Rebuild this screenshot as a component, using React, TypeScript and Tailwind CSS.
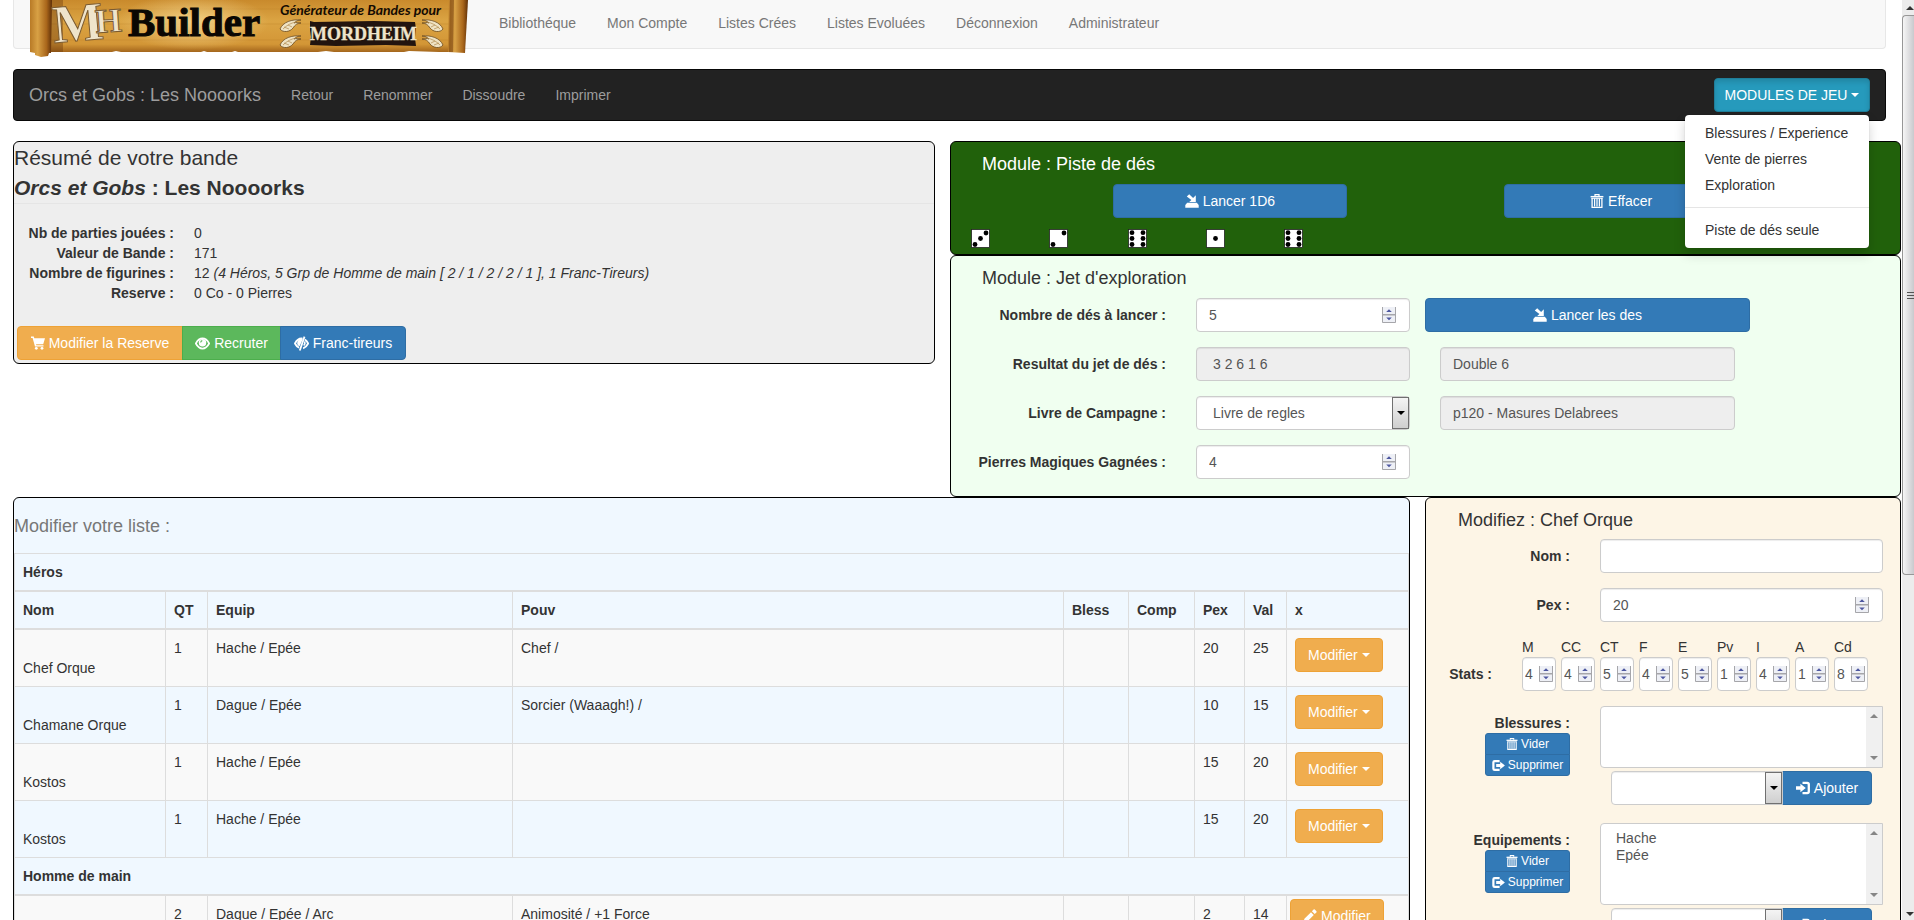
import React from "react";

type IconProps = { className?: string };

const CartIcon = ({ className = "size-[14px]" }: IconProps) => (
  <svg viewBox="0 0 14 14" className={className} fill="currentColor" aria-hidden="true">
    <path d="M0 .5h2.800l.5 1.700H14L12.200 8.200H5l.3 1h7.200v1.400H4L1.600 2H0z" />
    <circle cx="5.3" cy="12.3" r="1.4" />
    <circle cx="11" cy="12.3" r="1.4" />
  </svg>
);

const EyeIcon = ({ className = "size-[15px]" }: IconProps) => (
  <svg viewBox="0 0 14 14" className={className} fill="none" stroke="currentColor" aria-hidden="true">
    <path d="M.8 7C2.5 3.8 4.8 2.3 7 2.3S11.500 3.800 13.200 7C11.500 10.200 9.200 11.700 7 11.700S2.500 10.200.8 7z" strokeWidth="1.6" />
    <circle cx="7" cy="6.200" r="3.500" fill="currentColor" stroke="none" />
    <path d="M5.300 6a1.800 1.800 0 0 1 1.500-1.700" stroke="#5cb85c" strokeWidth="1" />
  </svg>
);

const EyeOffIcon = ({ className = "size-[15px]" }: IconProps) => (
  <svg viewBox="0 0 14 14" className={className} fill="none" stroke="currentColor" aria-hidden="true">
    <path d="M8 2.400C5 2 2.500 3.800.9 7c1 1.900 2.300 3.300 3.800 4M10.200 3.200c1.200.8 2.200 2.100 3 3.800-1.200 2.300-2.800 3.900-4.700 4.500" strokeWidth="1.700" />
    <path d="M8.200 3A3.400 3.400 0 0 0 5.200 9.600z" fill="currentColor" stroke="none" />
    <path d="M9.800.6 5.400 13.500" strokeWidth="1.700" />
    <path d="M10 5c.5 1.400.1 2.700-.9 3.800" strokeWidth="1.500" />
  </svg>
);

const SaveIcon = ({ className = "size-[14px]" }: IconProps) => (
  <svg viewBox="0 0 14 14" className={className} fill="currentColor" aria-hidden="true">
    <path d="M1.800 2.600 4.200.3l3.900 3.600L10.800 1.300V8H4.200l2.200-2z" />
    <path d="M2.200 8.800h9.600l1.900 2.300v2.600H.3v-2.600z" />
  </svg>
);

const TrashIcon = ({ className = "size-[14px]" }: IconProps) => (
  <svg viewBox="0 0 14 14" className={className} fill="none" stroke="currentColor" aria-hidden="true">
    <path d="M.6 2.700h12.800" strokeWidth="1.500" />
    <path d="M5 2V.7h4V2" strokeWidth="1.200" />
    <path d="M2.100 4v9.300h9.800V4" strokeWidth="1.300" />
    <path d="M4.600 4.500v8M7 4.500v8M9.400 4.500v8" strokeWidth="1.200" />
    <path d="M1.500 4.400h11" strokeWidth=".9" />
  </svg>
);

const LogOutIcon = ({ className = "size-[14px]" }: IconProps) => (
  <svg viewBox="0 0 14 14" className={className} fill="none" stroke="currentColor" aria-hidden="true">
    <path d="M8.200 2.200H2.900Q1.500 2.200 1.500 3.600v6.800Q1.500 11.800 2.900 11.800h5.300" strokeWidth="2.400" />
    <path d="M4.500 5.400h4.300V2.900L13.900 7l-5.100 4.100V8.600H4.500z" fill="currentColor" stroke="none" />
  </svg>
);

const LogInIcon = ({ className = "size-[14px]" }: IconProps) => (
  <svg viewBox="0 0 14 14" className={className} fill="none" stroke="currentColor" aria-hidden="true">
    <path d="M6.500 1.900h4.700q1.600 0 1.600 1.600v7q0 1.600-1.600 1.600H6.500" strokeWidth="2.300" />
    <path d="M0 5.300h4.400V2.700L9.800 7l-5.400 4.300V8.700H0z" fill="currentColor" stroke="none" />
  </svg>
);

const PencilIcon = ({ className = "size-[14px]" }: IconProps) => (
  <svg viewBox="0 0 14 14" className={className} fill="currentColor" aria-hidden="true">
    <path d="M.3 13.700 1.400 9.800 8 3.200l2.800 2.800-6.600 6.600zM8.900 2.300 10.600.6q.6-.5 1.200 0l1.600 1.600q.5.600 0 1.200l-1.700 1.700z" />
  </svg>
);

const Caret = () => (
  <svg viewBox="0 0 8 4" className="h-1 w-2" fill="currentColor" aria-hidden="true">
    <path d="M0 0h8L4 4z" />
  </svg>
);

const pips: Record<number, [number, number][]> = {
  1: [[9.500, 9.500]],
  2: [[15, 4], [4, 15.500]],
  3: [[15, 4], [9.500, 9.500], [4, 15.500]],
  6: [[4, 3.700], [4, 9.500], [4, 15.500], [15, 3.700], [15, 9.500], [15, 15.500]],
};

const Die = ({ value }: { value: number }) => (
  <svg viewBox="0 0 19 19" className="size-[19px]" role="img" aria-label={String(value)}>
    <rect x=".5" y=".5" width="18" height="18" fill="#fff" stroke="#222" strokeWidth=".8" />
    {pips[value].map(([x, y]) => (
      <circle key={`${x}-${y}`} cx={x} cy={y} r="2.400" fill="#000" />
    ))}
  </svg>
);

const Feather = ({ x, y, flip }: { x: number; y: number; flip?: boolean }) => (
  <g transform={`translate(${x} ${y}) scale(${flip ? -1 : 1} 1)`}>
    <path d="M21 0C12-1 3 2 0 9c3 4 10 3 13-1 2-3 4-5 8-5-3 0-5-1-7 0 2-2 4-3 7-3z" fill="#efe3c4" stroke="#6b4a1d" strokeWidth=".8" />
    <path d="M3 9c4-4 8-6 13-7M4 7l5 2M8 5l4 2" fill="none" stroke="#b08a4e" strokeWidth=".7" />
  </g>
);

const Banner = () => (
  <svg viewBox="0 0 440 57" className="h-[57px] w-[440px]" role="img" aria-label="MH Builder">
    <defs>
      <linearGradient id="parchment" x1="0" x2="0" y1="0" y2="1">
        <stop offset="0" stopColor="#c98a2c" />
        <stop offset=".4" stopColor="#dba443" />
        <stop offset=".85" stopColor="#d39636" />
        <stop offset="1" stopColor="#a4661c" />
      </linearGradient>
      <linearGradient id="roll" x1="0" x2="1" y1="0" y2="0">
        <stop offset="0" stopColor="#b87a26" />
        <stop offset=".35" stopColor="#d8a145" />
        <stop offset=".75" stopColor="#a9661b" />
        <stop offset="1" stopColor="#5e2f08" />
      </linearGradient>
      <radialGradient id="glow">
        <stop offset="0" stopColor="#f4d48b" stopOpacity=".9" />
        <stop offset="1" stopColor="#f4d48b" stopOpacity="0" />
      </radialGradient>
    </defs>
    <path d="M18 0H428V52l-18 0-30-1-5 1-70 0-8-1-8 1-80 0-3-1-3 1-25 0-3-1-3 1-80 0-5-1-4 1-64 0z" fill="url(#parchment)" />
    <path d="M22 9h400M22 24h400M22 40h400" stroke="#b97c27" strokeWidth="1" opacity=".3" />
    <rect x="20" y="0" width="14" height="52" fill="#5e2f08" opacity=".35" />
    <ellipse cx="164" cy="22" rx="76" ry="28" fill="url(#glow)" />
    <path d="M1 0h22l-1 53-2 0-1 3-7 1-6-2v-2l-5-1z" fill="url(#roll)" />
    <path d="M420 0h19l-3 53-17-1z" fill="url(#roll)" />
    <path d="M421 0h4l-1 52h-4z" fill="#6e3a0c" opacity=".5" />
    <g fontFamily="'Liberation Serif', serif" fontWeight="700">
      <text x="25" y="43" fontSize="54" fill="#efe4cb" stroke="#7a5a30" strokeWidth="1" transform="rotate(-5 25 43)">M</text>
      <text x="67" y="33" fontSize="34" fill="#efe4cb" stroke="#7a5a30" strokeWidth="1" transform="rotate(-4 67 33)">H</text>
      <text x="99" y="36" fontSize="41" fill="#0b0703" stroke="#0b0703" strokeWidth="1">Builder</text>
    </g>
    <text x="251" y="15" fontFamily="Lato, 'Open Sans', sans-serif" fontStyle="italic" fontWeight="700" fontSize="14" fill="#140b02">Générateur de Bandes pour</text>
    <Feather x={251} y={20} />
    <Feather x={251} y={36} />
    <Feather x={414} y={20} flip />
    <Feather x={414} y={36} flip />
    <path d="M281 21l4 1 60-1 41 1 1 7-1 9 1 8-30-1-50 1-26-1 1-8-1-7z" fill="#22140f" />
    <text x="281" y="40" fontFamily="'Liberation Serif', serif" fontWeight="700" fontSize="18" fill="#efe4cb" stroke="#efe4cb" strokeWidth=".3">MORDHEIM</text>
  </svg>
);

const Spinner = () => (
  <svg viewBox="0 0 14 16" className="h-4 w-[14px]" aria-hidden="true">
    <rect width="14" height="16" fill="#eef0f6" />
    <path d="M.5 0v15.500h13V0M0 8h14" fill="none" stroke="#a6a6aa" strokeWidth="1" />
    <path d="M1 7.500h12" stroke="#a6a6aa" />
    <path d="M4.200 5 7 2.200 9.800 5zM4.200 10.500 7 13.300l2.800-2.800z" fill="#4d57a0" />
  </svg>
);

const field =
  "block h-[34px] w-full rounded border border-[#ccc] bg-white text-sm text-[#555] shadow-[inset_0_1px_1px_rgba(0,0,0,0.075)] outline-none";
const primary = "cursor-pointer border-[#2e6da4] bg-[#337ab7] text-white";

const NumberField = ({ id, value, small, label }: { id: string; value: number; small?: boolean; label?: string }) => (
  <div className="relative">
    <input
      id={id}
      type="number"
      defaultValue={value}
      aria-label={label}
      className={`${field} [appearance:textfield] ${small ? "pl-[2px]" : "px-3"}`}
    />
    <span className={`pointer-events-none absolute top-[9px] ${small ? "right-[3px]" : "right-[14px]"}`}>
      <Spinner />
    </span>
  </div>
);

const SelectField = ({ id, value, label, joined }: { id: string; value: string; label?: string; joined?: boolean }) => (
  <div className="relative flex-1">
    <select id={id} aria-label={label} className={`${field} appearance-none pr-5 pl-4 ${joined ? "rounded-r-none" : ""}`}>
      <option>{value}</option>
    </select>
    <span className="pointer-events-none absolute inset-y-px right-px flex w-[17px] items-center justify-center border border-[#707070] bg-linear-to-b from-[#f4f4f4] to-[#cfcfcf] text-black">
      <Caret />
    </span>
  </div>
);

const moduleLabel = "pr-[30px] text-right font-bold whitespace-nowrap";

const Navbar = () => (
  <nav className="flex h-[49px] items-start rounded-b border border-t-0 border-[#e7e7e7] bg-[#f8f8f8] pl-[15px] text-[#777]">
    <a href="#" className="h-[57px] shrink-0">
      <Banner />
    </a>
    <ul className="flex gap-[31px] pt-[13px] pl-[30px]">
      {["Bibliothéque", "Mon Compte", "Listes Crées", "Listes Evoluées", "Déconnexion", "Administrateur"].map((item) => (
        <li key={item}>
          <a href="#">{item}</a>
        </li>
      ))}
    </ul>
  </nav>
);

const BandBar = () => (
  <nav className="mt-5 flex h-[52px] items-center rounded border border-[#080808] bg-[#222] px-[15px] text-[#9d9d9d]">
    <a href="#" className="pr-[15px] text-lg leading-5">Orcs et Gobs : Les Noooorks</a>
    <ul className="flex flex-1">
      {["Retour", "Renommer", "Dissoudre", "Imprimer"].map((item) => (
        <li key={item}>
          <a href="#" className="block px-[15px]">{item}</a>
        </li>
      ))}
    </ul>
    <div className="relative">
      <button
        type="button"
        aria-expanded="true"
        className="flex h-[34px] w-[156px] cursor-pointer items-center justify-center gap-1 rounded border border-[#1f7e9a] bg-[#269abc] text-white shadow-[inset_0_3px_5px_rgba(0,0,0,0.125)]"
      >
        MODULES DE JEU <Caret />
      </button>
      <ul className="absolute top-[37px] right-px z-10 w-[184px] rounded bg-white py-[5px] text-[#333] shadow-[0_6px_12px_rgba(0,0,0,0.175),0_0_1px_rgba(0,0,0,0.3)]">
        {["Blessures / Experience", "Vente de pierres", "Exploration"].map((item) => (
          <li key={item}>
            <a href="#" className="block px-5 py-[3px] whitespace-nowrap">{item}</a>
          </li>
        ))}
        <li className="my-[9px] h-px bg-[#e5e5e5]" />
        <li>
          <a href="#" className="block px-5 py-[3px]">Piste de dés seule</a>
        </li>
      </ul>
    </div>
  </nav>
);

const Summary = () => (
  <section className="rounded-md border border-black bg-[#eee]">
    <h2 className="border-b border-[#e5e5e5] pt-px text-[21px] leading-[30px]">
      Résumé de votre bande
      <br />
      <strong>
        <em>Orcs et Gobs</em> : Les Noooorks
      </strong>
    </h2>
    <dl className="mt-[19px] mb-5 grid grid-cols-[160px_1fr] gap-x-5">
      <dt className="text-right font-bold">Nb de parties jouées :</dt>
      <dd>0</dd>
      <dt className="text-right font-bold">Valeur de Bande :</dt>
      <dd>171</dd>
      <dt className="text-right font-bold">Nombre de figurines :</dt>
      <dd>
        12 <em>(4 Héros, 5 Grp de Homme de main [ 2 / 1 / 2 / 2 / 1 ], 1 Franc-Tireurs)</em>
      </dd>
      <dt className="text-right font-bold">Reserve :</dt>
      <dd>0 Co - 0 Pierres</dd>
    </dl>
    <div className="flex p-[3px]">
      <button type="button" className="flex h-[34px] w-[166px] cursor-pointer items-center justify-center gap-1 rounded-l border border-[#eea236] bg-[#f0ad4e] text-white">
        <CartIcon /> Modifier la Reserve
      </button>
      <button type="button" className="-ml-px flex h-[34px] w-[99px] cursor-pointer items-center justify-center gap-1 border border-[#4cae4c] bg-[#5cb85c] text-white">
        <EyeIcon /> Recruter
      </button>
      <button type="button" className={`-ml-px flex h-[34px] w-[126px] items-center justify-center gap-1 rounded-r border ${primary}`}>
        <EyeOffIcon /> Franc-tireurs
      </button>
    </div>
  </section>
);

const DiceModule = () => (
  <section className="rounded-md border border-black bg-[#21610b] pb-[6px]">
    <h3 className="px-[31px] pt-3 pb-[10px] text-lg leading-5 text-white">Module : Piste de dés</h3>
    <div className="grid grid-cols-12 px-[5px]">
      <button type="button" className={`col-span-3 col-start-3 flex h-[34px] items-center justify-center gap-1 rounded border ${primary}`}>
        <SaveIcon /> Lancer 1D6
      </button>
      <button type="button" className={`col-span-3 col-start-8 flex h-[34px] items-center justify-center gap-1 rounded border ${primary}`}>
        <TrashIcon /> Effacer
      </button>
    </div>
    <div className="mt-[11px] grid grid-cols-12 px-[5px]">
      {[3, 2, 6, 1, 6].map((value, i) => (
        <span key={i} className="pl-[15px]">
          <Die value={value} />
        </span>
      ))}
    </div>
  </section>
);

const ExplorationModule = () => (
  <section className="rounded-md border border-black bg-[#f0fff0] pb-[17px]">
    <h3 className="px-[31px] pt-3 pb-[10px] text-lg leading-5">Module : Jet d'exploration</h3>
    <div className="grid grid-cols-[245fr_214fr_340fr_150fr] items-center gap-y-[15px]">
      <label htmlFor="dice-count" className={moduleLabel}>Nombre de dés à lancer :</label>
      <NumberField id="dice-count" value={5} />
      <div className="pl-[15px]">
        <button type="button" className={`flex h-[34px] w-full items-center justify-center gap-1 rounded border ${primary}`}>
          <SaveIcon /> Lancer les des
        </button>
      </div>
      <span />
      <label htmlFor="dice-result" className={moduleLabel}>Resultat du jet de dés :</label>
      <input id="dice-result" readOnly defaultValue="3 2 6 1 6" className={`${field} bg-[#eee]! px-4`} />
      <div className="pr-[15px] pl-[30px]">
        <input aria-label="Combinaison" readOnly defaultValue="Double 6" className={`${field} bg-[#eee]! px-3`} />
      </div>
      <span />
      <label htmlFor="book" className={moduleLabel}>Livre de Campagne :</label>
      <SelectField id="book" value="Livre de regles" />
      <div className="pr-[15px] pl-[30px]">
        <input aria-label="Lieu" readOnly defaultValue="p120 - Masures Delabrees" className={`${field} bg-[#eee]! px-3`} />
      </div>
      <span />
      <label htmlFor="stones" className={moduleLabel}>Pierres Magiques Gagnées :</label>
      <NumberField id="stones" value={4} />
    </div>
  </section>
);

type Member = { name: string; qt: number; equip: string; pouv: string; pex: number; val: number };

const heroes: Member[] = [
  { name: "Chef Orque", qt: 1, equip: "Hache / Epée", pouv: "Chef /", pex: 20, val: 25 },
  { name: "Chamane Orque", qt: 1, equip: "Dague / Epée", pouv: "Sorcier (Waaagh!) /", pex: 10, val: 15 },
  { name: "Kostos", qt: 1, equip: "Hache / Epée", pouv: "", pex: 15, val: 20 },
  { name: "Kostos", qt: 1, equip: "Hache / Epée", pouv: "", pex: 15, val: 20 },
];
const henchmen: Member[] = [{ name: "", qt: 2, equip: "Dague / Epée / Arc", pouv: "Animosité / +1 Force", pex: 2, val: 14 }];

const cell = "border border-[#ddd] p-2 align-top";
const warning = "flex h-[34px] cursor-pointer items-center gap-1 rounded border border-[#eea236] bg-[#f0ad4e] px-3 text-white";

const MemberRow = ({ m, henchman, odd }: { m: Member; henchman?: boolean; odd: boolean }) => (
  <tr className={odd ? "bg-[#f9f9f9]" : ""}>
    <td className={cell}>
      <br />
      {m.name}
    </td>
    <td className={cell}>{m.qt}</td>
    <td className={cell}>{m.equip}</td>
    <td className={cell}>{m.pouv}</td>
    <td className={cell} />
    <td className={cell} />
    <td className={cell}>{m.pex}</td>
    <td className={cell}>{m.val}</td>
    <td className={henchman ? "border border-[#ddd] p-[3px] align-top" : cell}>
      <button type="button" className={warning}>
        {henchman && <PencilIcon />} Modifier {!henchman && <Caret />}
      </button>
    </td>
  </tr>
);

const Roster = () => (
  <section className="rounded-md border border-black bg-[#f0f8ff]">
    <table className="w-full table-fixed border-collapse text-left">
      <caption className="pt-[18px] pb-[17px] text-left text-lg leading-5 text-[#777]">Modifier votre liste :</caption>
      <colgroup>
        <col className="w-[151px]" />
        <col className="w-[42px]" />
        <col className="w-[305px]" />
        <col />
        <col className="w-[65px]" />
        <col className="w-[66px]" />
        <col className="w-[50px]" />
        <col className="w-[42px]" />
        <col className="w-[122px]" />
      </colgroup>
      <thead>
        <tr>
          <th colSpan={9} className={`${cell} border-b-2`}>Héros</th>
        </tr>
        <tr>
          {["Nom", "QT", "Equip", "Pouv", "Bless", "Comp", "Pex", "Val", "x"].map((h) => (
            <th key={h} className={`${cell} border-b-2`}>{h}</th>
          ))}
        </tr>
      </thead>
      <tbody>
        {heroes.map((m, i) => (
          <MemberRow key={i} m={m} odd={i % 2 === 0} />
        ))}
        <tr>
          <th colSpan={9} className={`${cell} border-b-2`}>Homme de main</th>
        </tr>
        {henchmen.map((m, i) => (
          <MemberRow key={i} m={m} odd henchman />
        ))}
      </tbody>
    </table>
  </section>
);

const stats: [string, number][] = [["M", 4], ["CC", 4], ["CT", 5], ["F", 4], ["E", 5], ["Pv", 1], ["I", 4], ["A", 1], ["Cd", 8]];

const ListEditor = ({ id, label, options, tall }: { id: string; label: string; options: string[]; tall?: boolean }) => (
  <div className="grid grid-cols-[174fr_283fr_17fr]">
    <div className="flex flex-col items-end pt-[7px] pr-[30px]">
      <label htmlFor={id} className="font-bold">{label}</label>
      <div className="flex w-[85px] flex-col text-xs">
        <button type="button" className={`flex h-[22px] items-center justify-center gap-[3px] rounded-t-[3px] border ${primary}`}>
          <TrashIcon className="size-3" /> Vider
        </button>
        <button type="button" className={`-mt-px flex h-[22px] items-center justify-center gap-[3px] rounded-b-[3px] border ${primary}`}>
          <LogOutIcon className="size-[13px]" /> Supprimer
        </button>
      </div>
    </div>
    <div>
      <div className="relative">
        <select
          id={id}
          multiple
          className={`block w-full overflow-hidden rounded-l border border-[#ccc] bg-white py-[6px] pl-3 text-sm text-[#555] outline-none ${tall ? "h-[82px]" : "h-[62px]"}`}
        >
          {options.map((o) => (
            <option key={o} className="p-0 pl-[3px] leading-[17px]">{o}</option>
          ))}
        </select>
        <span className="pointer-events-none absolute inset-y-px right-px flex w-4 flex-col items-center justify-between bg-[#f0f0f0] py-[7px] text-[#868686]">
          <span className="rotate-180"><Caret /></span>
          <Caret />
        </span>
      </div>
      <div className="mt-[3px] flex px-[11px]">
        <SelectField id={`${id}-add`} value="" label={`Ajouter ${label}`} joined />
        <button type="button" className={`-ml-px flex h-[34px] w-[90px] items-center justify-center gap-1 rounded-r border ${primary}`}>
          <LogInIcon /> Ajouter
        </button>
      </div>
    </div>
  </div>
);

const Editor = () => (
  <section className="rounded-md border border-black bg-[#fdf5e6] pb-4">
    <h3 className="px-8 pt-3 pb-[9px] text-lg leading-5">Modifiez : Chef Orque</h3>
    <div className="grid grid-cols-[174fr_283fr_17fr] items-center gap-y-[15px]">
      <label htmlFor="name" className={moduleLabel}>Nom :</label>
      <input id="name" className={`${field} px-3`} />
      <span />
      <label htmlFor="pex" className={moduleLabel}>Pex :</label>
      <NumberField id="pex" value={20} />
    </div>
    <div className="mt-[15px] flex items-end">
      <span className="w-[96px] pr-[30px] pb-[7px] text-right font-bold">Stats :</span>
      <div className="flex gap-[5px]">
        {stats.map(([name, value]) => (
          <div key={name} className="w-[34px]">
            <label htmlFor={`stat-${name}`} className="block">{name}</label>
            <NumberField id={`stat-${name}`} value={value} small />
          </div>
        ))}
      </div>
    </div>
    <div className="mt-[15px] flex flex-col gap-[18px]">
      <ListEditor id="wounds" label="Blessures :" options={[]} />
      <ListEditor id="gear" label="Equipements :" options={["Hache", "Epée"]} tall />
    </div>
  </section>
);

const Scrollbar = () => (
  <div aria-hidden="true" className="flex w-3 shrink-0 flex-col overflow-hidden bg-[#ececec] text-[#333]">
    <div className="flex h-[15px] items-center justify-end">
      <span className="rotate-180"><Caret /></span>
    </div>
    <div className="flex h-[560px] flex-col items-end justify-center gap-[2px] rounded-l-sm border border-r-0 border-[#979797] bg-linear-to-r from-[#f6f6f6] to-[#c9c9cd]">
      <span className="h-px w-[7px] bg-[#555]" />
      <span className="h-px w-[7px] bg-[#555]" />
      <span className="h-px w-[7px] bg-[#555]" />
    </div>
    <div className="flex flex-1 items-end justify-end pb-1">
      <Caret />
    </div>
  </div>
);

export default function App() {
  return (
    <div className="flex h-screen overflow-hidden bg-white font-['Liberation_Sans',Arial,sans-serif] text-sm leading-5 text-[#333]">
      <main className="min-w-0 flex-1 pr-px pl-[13px]">
        <div className="pr-[15px]">
          <Navbar />
          <BandBar />
        </div>
        <div className="mt-5 flex items-start gap-[15px]">
          <div className="min-w-0 flex-[922]">
            <Summary />
          </div>
          <div className="min-w-0 flex-[951]">
            <DiceModule />
            <ExplorationModule />
          </div>
        </div>
        <div className="flex items-start gap-[15px]">
          <div className="min-w-0 flex-[1397]">
            <Roster />
          </div>
          <div className="min-w-0 flex-[476]">
            <Editor />
          </div>
        </div>
      </main>
      <Scrollbar />
    </div>
  );
}
